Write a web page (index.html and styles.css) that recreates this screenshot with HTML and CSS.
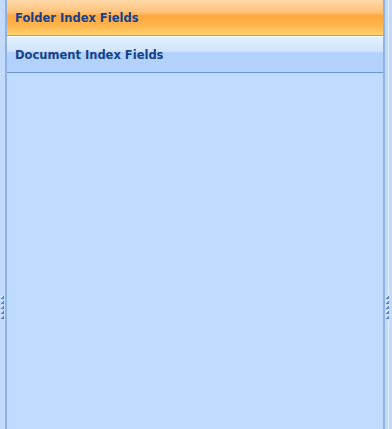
FILE: index.html
```html
<!DOCTYPE html>
<html>
<head>
<meta charset="utf-8">
<link rel="stylesheet" href="styles.css">
</head>
<body>
<div class="frame">
  <div class="strip strip-left">
    <div class="grip"><span></span><span></span><span></span><span></span><span></span></div>
  </div>
  <div class="panel">
    <div class="header header-active">Folder Index Fields</div>
    <div class="header header-normal">Document Index Fields</div>
    <div class="content"></div>
  </div>
  <div class="strip strip-right">
    <div class="grip"><span></span><span></span><span></span><span></span><span></span></div>
  </div>
</div>
</body>
</html>
```
FILE: styles.css
```css
html, body {
  margin: 0;
  padding: 0;
  height: 100%;
  background: #bfdbff;
}
.frame {
  display: flex;
  height: 429px;
  width: 392px;
}
.strip {
  background: #c3dafb;
  display: flex;
  align-items: flex-start;
  padding-top: 296px;
  box-sizing: border-box;
}
.strip-left {
  width: 7px;
  border-right: 2px solid #8db2e3;
}
.strip-right {
  width: 9px;
  border-left: 2px solid #8db2e3;
  background: linear-gradient(to right, #c3dafb 0, #c3dafb 3px, #e4efff 3px, #e4efff 4px, #c3dafb 4px);
}
.grip {
  display: flex;
  flex-direction: column;
  gap: 2px;
  padding-left: 1px;
}
.grip span {
  display: block;
  width: 3px;
  height: 3px;
  background: linear-gradient(135deg, #ffffff 0 33%, #5a87c9 34% 100%);
}
.panel {
  flex: 1;
  display: flex;
  flex-direction: column;
  background: #bfdbff;
}
.header {
  box-sizing: border-box;
  height: 36px;
  padding-left: 8px;
  padding-top: 1px;
  line-height: 34px;
  font-family: "DejaVu Sans", Verdana, sans-serif;
  font-weight: bold;
  font-size: 11.5px;
  color: #15428b;
  border-bottom: 1px solid #6f94cf;
}
.header-active {
  background: linear-gradient(to bottom, #ffd9a9 0%, #ffc27a 35%, #ffa83f 45%, #ffb64f 75%, #ffd36e 100%);
  border-bottom-color: #c59a5a;
}
.header-normal {
  height: 37px;
  background: linear-gradient(to bottom, #e3efff 0%, #d2e5fd 40%, #b3d2fb 45%, #b3d2fb 100%);
  border-top: 1px solid #ffffff;
}
.content {
  flex: 1;
  background: #bfdbff;
}
```
